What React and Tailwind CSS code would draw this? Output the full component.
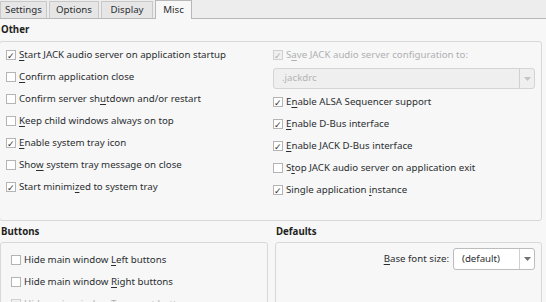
// mnemonic label: [before, underlined, after]
const leftOther = [
  { parts: ["", "S", "tart JACK audio server on application startup"], on: true },
  { parts: ["", "C", "onfirm application close"], on: false },
  { parts: ["Confirm server sh", "u", "tdown and/or restart"], on: false },
  { parts: ["", "K", "eep child windows always on top"], on: false },
  { parts: ["", "E", "nable system tray icon"], on: true },
  { parts: ["Sho", "w", " system tray message on close"], on: false },
  { parts: ["Start minimi", "z", "ed to system tray"], on: true },
];

const rightOther = [
  { parts: ["E", "n", "able ALSA Sequencer support"], on: true },
  { parts: ["", "E", "nable D-Bus interface"], on: true },
  { parts: ["", "E", "nable JACK D-Bus interface"], on: true },
  { parts: ["S", "t", "op JACK audio server on application exit"], on: false },
  { parts: ["Single application ", "i", "nstance"], on: true },
];

const tabs = [
  { name: "Settings", w: "w-[47px]" },
  { name: "Options", w: "w-[50px]" },
  { name: "Display", w: "w-[52px]" },
];

const Check = ({ parts, on, disabled }) => (
  <div className={`flex items-center h-[22px] ${disabled ? "text-[#aeb0b2]" : "text-[#2b2e31]"}`}>
    <span
      className={`w-[10px] h-[10px] border flex items-center justify-center text-[9px] leading-none ${
        disabled ? "border-[#d0d0d0] bg-[#f0f0f0]" : "border-[#b4b4b4] bg-white"
      }`}
    >
      {on ? "✓" : ""}
    </span>
    <span className="ml-[3px] whitespace-nowrap">
      {parts[0]}
      <span className="underline underline-offset-2">{parts[1]}</span>
      {parts[2]}
    </span>
  </div>
);

const Combo = ({ value, disabled, className }) => (
  <div
    className={`flex items-stretch border rounded-[3px] ${
      disabled ? "border-[#d4d4d4] bg-[#efefef] text-[#b4b4b4]" : "border-[#bcbcbc] bg-white text-[#2b2e31]"
    } ${className}`}
  >
    <span className="flex-1 flex items-center pl-[8px]">{value}</span>
    <span className="w-[15px] border-l border-[#d0d0d0] flex items-center justify-center">
      <svg width="7" height="4" viewBox="0 0 7 4">
        <path d="M0 0h7L3.5 4z" fill={disabled ? "#c4c4c4" : "#6e7175"} />
      </svg>
    </span>
  </div>
);

export default function App() {
  return (
    <div
      className="w-[546px] h-[302px] overflow-hidden bg-[#f7f7f7] text-[9.7px] text-[#2b2e31]"
      style={{ fontFamily: '"Noto Sans", "Open Sans", sans-serif' }}
    >
      {/* tabs */}
      <div className="flex items-end h-[19px] bg-[#ededed] border-b border-[#b8b8b8]">
        {tabs.map((t) => (
          <div
            key={t.name}
            className={`${t.w} h-[17px] mr-[2px] bg-[#e6e6e6] border-x border-t border-[#c8c8c8] flex items-center justify-center`}
          >
            {t.name}
          </div>
        ))}
        <div className="h-[19px] -mb-px w-[37px] bg-[#f7f7f7] border-x border-t border-[#b8b8b8] flex items-center justify-center">
          Misc
        </div>
      </div>

      {/* Other */}
      <div className="font-bold h-[22px] flex items-center pl-[1px] text-[#1e1f21]">Other</div>
      <div className="ml-[-1px] mr-[4px] h-[180px] border border-[#d8d8d8] rounded-[3px] bg-[#f7f7f7] flex pt-[2px]">
        <div className="w-[273px] pl-[6px]">
          {leftOther.map((c) => (
            <Check key={c.parts.join("")} {...c} />
          ))}
        </div>
        <div className="flex-1">
          <Check parts={["S", "a", "ve JACK audio server configuration to:"]} on disabled />
          <Combo value=".jackdrc" disabled className="h-[21px] w-[262px] my-[2px]" />
          {rightOther.map((c) => (
            <Check key={c.parts.join("")} {...c} />
          ))}
        </div>
      </div>

      {/* Buttons / Defaults */}
      <div className="flex mt-[1px]">
        <div className="w-[274px]">
          <div className="font-bold h-[20px] flex items-center pl-[1px] text-[#1e1f21]">Buttons</div>
          <div className="w-[268px] h-[80px] border border-[#d8d8d8] rounded-[3px] pl-[10px] pt-[6px]">
            <Check parts={["Hide main window ", "L", "eft buttons"]} />
            <Check parts={["Hide main window ", "R", "ight buttons"]} />
            <Check parts={["Hide main window ", "T", "ransport buttons"]} disabled />
          </div>
        </div>
        <div className="w-[267px] ml-[1px]">
          <div className="font-bold h-[20px] flex items-center pl-[1px] text-[#1e1f21]">Defaults</div>
          <div className="h-[80px] border border-[#d8d8d8] rounded-[3px] pt-[5px] pr-[6px] flex justify-end items-start">
            <span className="h-[22px] flex items-center mr-[4px]">
              <span className="underline underline-offset-2">B</span>ase font size:
            </span>
            <Combo value="(default)" className="h-[22px] w-[82px]" />
          </div>
        </div>
      </div>
    </div>
  );
}
